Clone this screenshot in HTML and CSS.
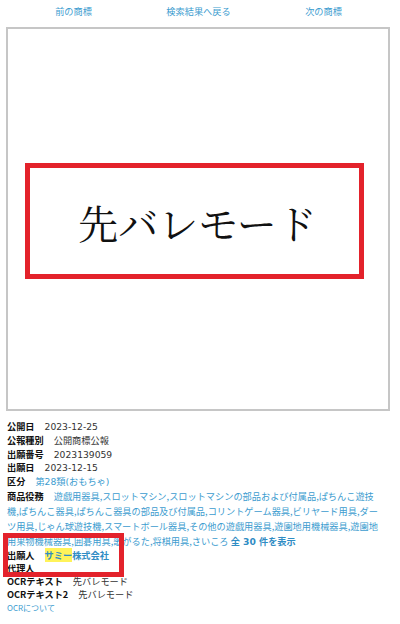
FILE: index.html
```html
<!DOCTYPE html>
<html lang="ja">
<head>
<meta charset="utf-8">
<title>先バレモード</title>
<link rel="stylesheet" href="styles.css">
</head>
<body>
<div class="page">
  <nav class="nav">
    <a href="#">前の商標</a>
    <a href="#">検索結果へ戻る</a>
    <a href="#">次の商標</a>
  </nav>
  <div class="figure">
    <div class="mark"><span>先バレモード</span></div>
  </div>
  <div class="info">
    <div class="row"><span class="label">公開日</span><span class="value num">2023-12-25</span></div>
    <div class="row"><span class="label">公報種別</span><span class="value">公開商標公報</span></div>
    <div class="row"><span class="label">出願番号</span><span class="value num">2023139059</span></div>
    <div class="row"><span class="label">出願日</span><span class="value num">2023-12-15</span></div>
    <div class="row"><span class="label">区分</span><a class="link num" href="#">第28類(おもちゃ)</a></div>
    <div class="row goods"><span class="label">商品役務</span><span class="links"><a class="link" href="#">遊戯用器具</a>,<a class="link" href="#">スロットマシン</a>,<a class="link" href="#">スロットマシンの部品および付属品</a>,<a class="link" href="#">ぱちんこ遊技機</a>,<a class="link" href="#">ぱちんこ器具</a>,<a class="link" href="#">ぱちんこ器具の部品及び付属品</a>,<a class="link" href="#">コリントゲーム器具</a>,<a class="link" href="#">ビリヤード用具</a>,<a class="link" href="#">ダーツ用具</a>,<a class="link" href="#">じゃん球遊技機</a>,<a class="link" href="#">スマートボール器具</a>,<a class="link" href="#">その他の遊戯用器具</a>,<a class="link" href="#">遊園地用機械器具</a>,<a class="link" href="#">遊園地用果物機械器具</a>,<a class="link" href="#">囲碁用具</a>,<a class="link" href="#">歌がるた</a>,<a class="link" href="#">将棋用具</a>,<a class="link" href="#">さいころ</a> <a class="more num" href="#">全 30 件を表示</a></span></div>
    <div class="row lower"><span class="label">出願人</span><a class="owner" href="#"><mark class="hl">サミー</mark>株式会社</a></div>
    <div class="row lower"><span class="label">代理人</span></div>
    <div class="row lower"><span class="label">OCRテキスト</span><span class="value">先バレモード</span></div>
    <div class="row lower"><span class="label">OCRテキスト2</span><span class="value">先バレモード</span></div>
    <div class="row lower"><a class="note" href="#">OCRについて</a></div>
  </div>
  <div class="annot"></div>
</div>
</body>
</html>
```
FILE: styles.css
```css
html, body {
  margin: 0;
  padding: 0;
  background: #ffffff;
}
.page {
  position: relative;
  width: 400px;
  height: 624px;
  font-family: "Noto Sans CJK JP", "Liberation Sans", sans-serif;
  font-size: 9.2px;
  color: #333333;
}
a {
  text-decoration: none;
}
.nav {
  display: grid;
  grid-template-columns: repeat(3, 125px);
  justify-items: center;
  margin-left: 11px;
  padding-top: 4px;
  line-height: 14px;
}
.nav a {
  color: #3c9ccf;
}
.figure {
  box-sizing: border-box;
  width: 384px;
  height: 384px;
  margin: 9px 0 0 6px;
  border: 2px solid #c6c6c6;
  padding: 134px 0 0 17px;
}
.mark {
  box-sizing: border-box;
  width: 339px;
  height: 116px;
  border: 5px solid #e3222b;
  display: flex;
  align-items: center;
  justify-content: center;
  padding-left: 6px;
  font-family: "Noto Serif CJK JP", "Noto Sans CJK JP", serif;
  font-weight: 400;
  font-size: 40px;
  color: #111111;
}
.info {
  width: 376px;
  margin-top: 9px;
  padding-left: 7px;
}
.row {
  line-height: 13.8px;
  min-height: 13.8px;
}
.goods {
  line-height: 15px;
}
.lower {
  line-height: 13px;
  min-height: 13px;
}
.label {
  font-weight: bold;
  color: #111111;
  margin-right: 10px;
}
.value {
  color: #333333;
}
.num {
  font-family: "DejaVu Sans", "Noto Sans CJK JP", sans-serif;
  line-height: 1;
}
.link, .links {
  color: #3c9ccf;
}
.more {
  color: #2f8cc4;
  font-weight: bold;
}
.owner {
  color: #2f8cc4;
  font-weight: bold;
}
.hl {
  background: #fff35a;
  color: #2f8cc4;
}
.note {
  color: #3c9ccf;
  font-size: 8px;
}
.annot {
  position: absolute;
  left: 3px;
  top: 533px;
  width: 121px;
  height: 44px;
  box-sizing: border-box;
  border: 5px solid #e3222b;
}
```
